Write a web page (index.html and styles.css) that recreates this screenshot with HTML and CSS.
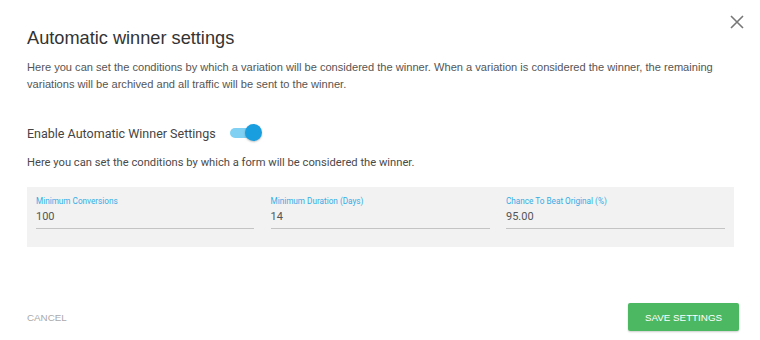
FILE: index.html
```html
<!DOCTYPE html>
<html>
<head>
<meta charset="utf-8">
<link rel="stylesheet" href="styles.css">
</head>
<body>
<div class="dialog">
  <button class="close" aria-label="Close">
    <svg width="14" height="14" viewBox="0 0 14 14"><path d="M1 1L13 13M13 1L1 13" stroke="#777" stroke-width="1.6" fill="none"/></svg>
  </button>
  <h1 class="title">Automatic winner settings</h1>
  <p class="intro">Here you can set the conditions by which a variation will be considered the winner. When a variation is considered the winner, the remaining variations will be archived and all traffic will be sent to the winner.</p>
  <div class="enable-row">
    <span class="enable-label">Enable Automatic Winner Settings</span>
    <span class="toggle"><span class="track"></span><span class="thumb"></span></span>
  </div>
  <p class="desc">Here you can set the conditions by which a form will be considered the winner.</p>
  <div class="panel">
    <div class="field">
      <label class="field-label">Minimum Conversions</label>
      <div class="field-value">100</div>
    </div>
    <div class="field">
      <label class="field-label">Minimum Duration (Days)</label>
      <div class="field-value">14</div>
    </div>
    <div class="field">
      <label class="field-label">Chance To Beat Original (%)</label>
      <div class="field-value">95.00</div>
    </div>
  </div>
  <div class="footer">
    <button class="cancel">CANCEL</button>
    <button class="save">SAVE SETTINGS</button>
  </div>
</div>
</body>
</html>
```

FILE: styles.css
```css
* { box-sizing: border-box; }
html, body { margin: 0; padding: 0; background: #fff; }
body { width: 760px; height: 340px; overflow: hidden; font-family: "Liberation Sans", Arial, sans-serif; }
.dialog { position: relative; padding: 26px 21px 0 27px; }
.close {
  position: absolute; top: 15px; right: 16px;
  background: none; border: 0; padding: 0; width: 14px; height: 14px; cursor: pointer;
}
.close svg { display: block; }
.title {
  margin: 0; font-weight: normal; font-size: 18.2px; line-height: 24px; color: #333;
}
.intro {
  margin: 8.5px 0 0; font-size: 11.1px; line-height: 17px; color: #555; width: 710px;
}
.enable-row { display: flex; align-items: center; margin-top: 30.5px; height: 20px; }
.enable-label { font-family: Roboto, sans-serif; font-size: 12.5px; color: #444; }
.toggle { position: relative; width: 32px; height: 16px; margin-left: 14px; display: inline-block; }
.track {
  position: absolute; left: 0; top: 3px; width: 28px; height: 10px; border-radius: 5px; background: #7fd0f3;
}
.thumb {
  position: absolute; left: 15px; top: -1px; width: 17px; height: 17px; border-radius: 50%;
  background: #199ee0; box-shadow: 0 1px 2px rgba(0,0,0,0.25);
}
.desc {
  margin: 12px 0 0; font-family: Roboto, sans-serif; font-size: 11.2px; line-height: 16px; color: #4a4a4a;
}
.panel {
  margin-top: 16px; width: 707px; height: 60px; background: #f2f2f2;
  padding: 8px 9px 0 9px;
  display: grid; grid-template-columns: 218px 219px 219px; column-gap: 16.5px;
  align-items: start;
}
.field { border-bottom: 1px solid #c4c4c4; height: 34px; }
.field-label {
  display: block; font-family: Roboto, sans-serif; font-size: 8.2px; line-height: 12px; color: #35ace6;
}
.field-value {
  font-family: Roboto, sans-serif; font-size: 11px; line-height: 16px; color: #555; margin-top: 2px;
}
.footer {
  display: flex; justify-content: space-between; align-items: center;
  margin-top: 56px;
}
.cancel {
  background: none; border: 0; padding: 0; font-family: "Liberation Sans", Arial, sans-serif;
  font-size: 9.8px; color: #aaa;
}
.save {
  width: 111px; height: 28px; background: #4cb862; border: 0; border-radius: 2px; color: #fff;
  font-family: "Liberation Sans", Arial, sans-serif; font-size: 9.8px;
  box-shadow: 0 1px 2px rgba(0,0,0,0.2);
}
```
